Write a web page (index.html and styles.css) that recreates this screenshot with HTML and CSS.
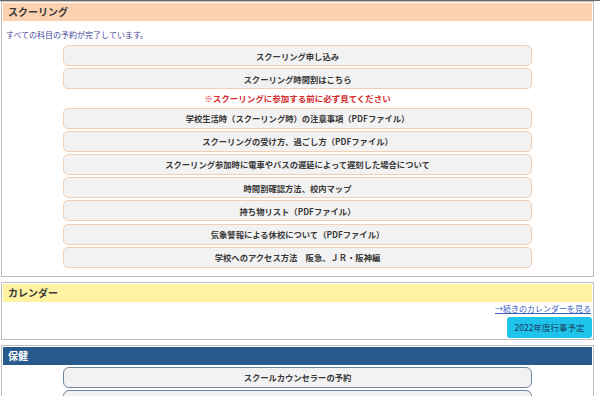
FILE: index.html
```html
<!DOCTYPE html>
<html lang="ja">
<head>
<meta charset="utf-8">
<link rel="stylesheet" href="styles.css">
</head>
<body>
<div class="page">
  <section class="panel">
    <h2 class="panel-head head-orange">スクーリング</h2>
    <div class="panel-body">
      <p class="note">すべての科目の予約が完了しています。</p>
      <div class="btn-list">
        <a class="btn">スクーリング申し込み</a>
        <a class="btn">スクーリング時間割はこちら</a>
        <p class="warn">※スクーリングに参加する前に必ず見てください</p>
        <a class="btn">学校生活時（スクーリング時）の注意事項（PDFファイル）</a>
        <a class="btn">スクーリングの受け方、過ごし方（PDFファイル）</a>
        <a class="btn">スクーリング参加時に電車やバスの遅延によって遅刻した場合について</a>
        <a class="btn">時間割確認方法、校内マップ</a>
        <a class="btn">持ち物リスト（PDFファイル）</a>
        <a class="btn">気象警報による休校について（PDFファイル）</a>
        <a class="btn">学校へのアクセス方法　阪急、ＪＲ・阪神編</a>
      </div>
    </div>
  </section>
  <section class="panel">
    <h2 class="panel-head head-yellow">カレンダー</h2>
    <div class="cal-body">
      <a class="more-link">→続きのカレンダーを見る</a>
      <a class="cyan-btn">2022年度行事予定</a>
    </div>
  </section>
  <section class="panel">
    <h2 class="panel-head head-blue">保健</h2>
    <div class="panel-body health">
      <div class="btn-list">
        <a class="btn btn-blue">スクールカウンセラーの予約</a>
        <a class="btn btn-blue"></a>
      </div>
    </div>
  </section>
</div>
</body>
</html>
```
FILE: styles.css
```css
html, body {
  margin: 0;
  padding: 0;
  background: #ffffff;
}
body {
  font-family: "Noto Sans CJK JP", "Noto Sans", sans-serif;
  color: #333333;
  height: 396px;
  overflow: hidden;
}
.page {
  border-top: 1px solid #6a6a6a;
  padding-left: 1px;
  padding-right: 6px;
}
.panel {
  border: 1px solid #bdbdbd;
  padding: 1px 1px 0 1px;
  margin-bottom: 5px;
  background: #ffffff;
}
.panel-head {
  margin: 0;
  height: 18px;
  line-height: 18px;
  font-size: 10px;
  font-weight: bold;
  padding-left: 5px;
  color: #3a3a3a;
}
.head-orange { background: #fbd1b0; }
.head-yellow { background: #fff2a2; }
.head-blue { background: #285a8c; color: #ffffff; }

.panel-body {
  padding: 8px 0 8px 0;
}
.note {
  margin: 0 0 4px 3px;
  font-size: 8px;
  line-height: 12px;
  color: #4848a0;
}
.btn-list {
  display: flex;
  flex-direction: column;
  align-items: center;
  gap: 2.2px;
}
.btn {
  box-sizing: border-box;
  width: 469px;
  height: 21px;
  display: flex;
  align-items: center;
  justify-content: center;
  background: #f2f2f2;
  border: 1px solid #f4ceb0;
  border-radius: 5px;
  font-size: 8.3px;
  font-weight: bold;
  color: #383838;
}
.warn {
  margin: 0;
  height: 14px;
  line-height: 14px;
  font-size: 8.5px;
  font-weight: bold;
  color: #d42a2a;
}
.cal-body {
  display: flex;
  flex-direction: column;
  align-items: flex-end;
  padding: 1px 0 1px 0;
}
.more-link {
  font-size: 8px;
  line-height: 12px;
  color: #3a5ec0;
  text-decoration: underline;
  margin-right: 1px;
}
.cyan-btn {
  box-sizing: border-box;
  margin-top: 2px;
  width: 85px;
  height: 21px;
  display: flex;
  align-items: center;
  justify-content: center;
  background: #1ec4ec;
  border-radius: 3px;
  font-size: 8.5px;
  color: #1c3a5a;
}
.health {
  padding-top: 2px;
}
.btn-blue {
  border: 1.5px solid #6e85a2;
  border-radius: 6px;
}
```
